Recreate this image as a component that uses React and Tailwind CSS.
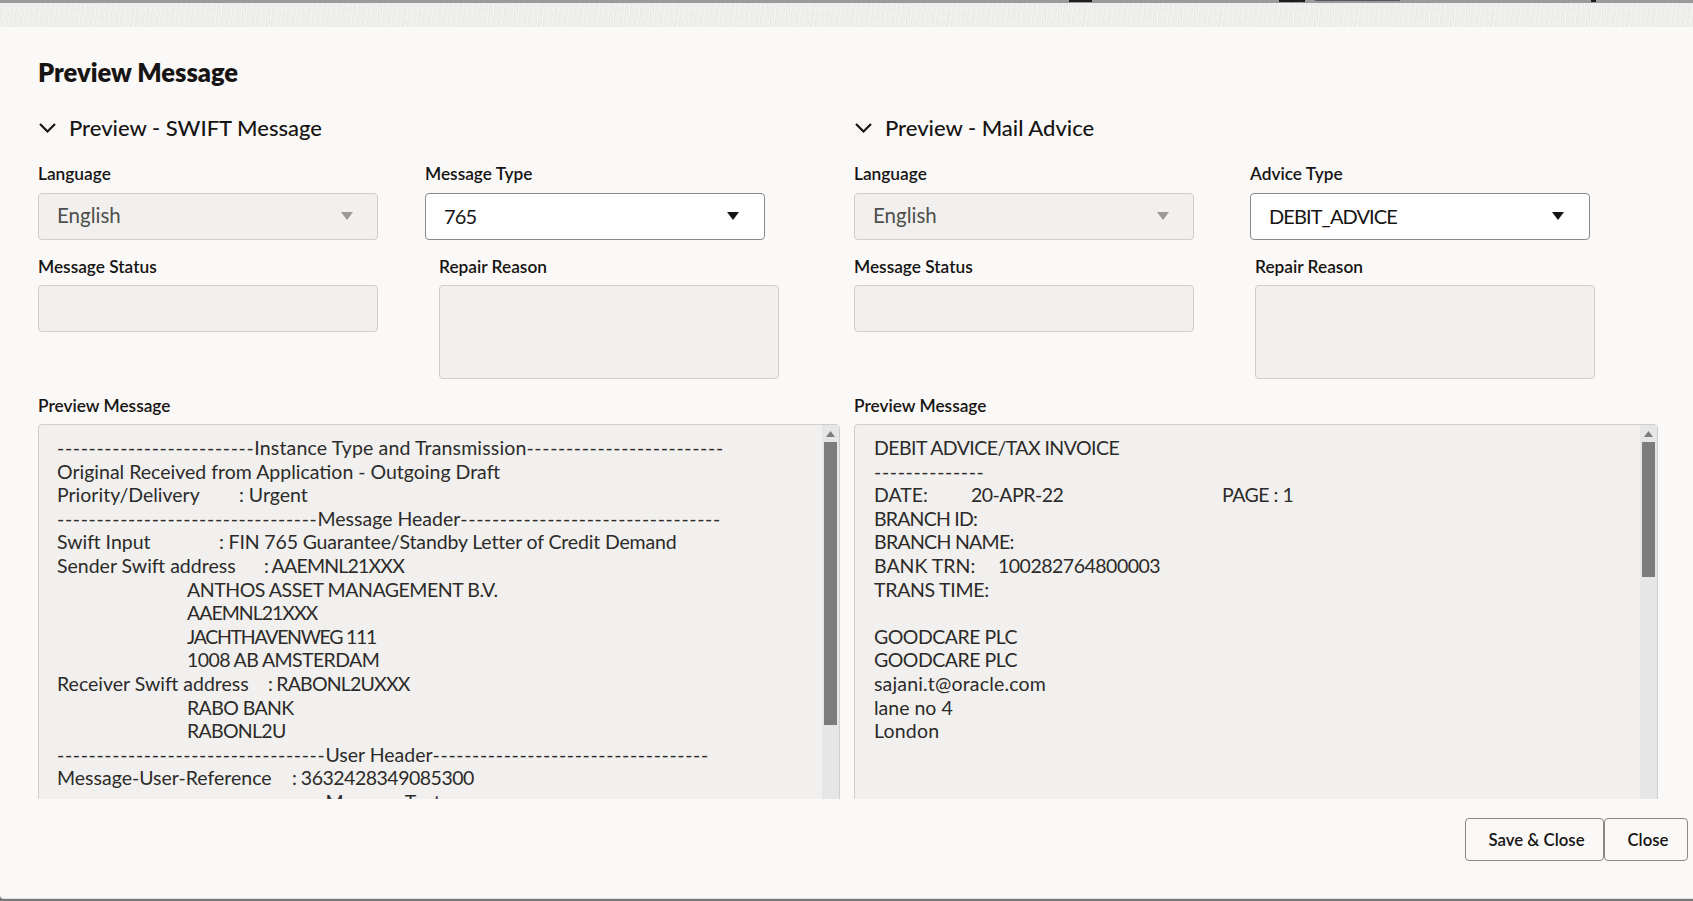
const swiftLines = [
  { text: "-------------------------Instance Type and Transmission-------------------------", track: "tracking-[0.15px]" },
  { text: "Original Received from Application - Outgoing Draft" },
  { label: "Priority/Delivery", labelClass: "w-[182px]", text: ": Urgent" },
  { text: "---------------------------------Message Header---------------------------------" },
  { label: "Swift Input", labelClass: "w-[162px]", text: ": FIN 765 Guarantee/Standby Letter of Credit Demand", track: "tracking-[-0.15px]" },
  { label: "Sender Swift address", labelClass: "w-[207px]", text: ": AAEMNL21XXX", track: "tracking-[-0.8px]" },
  { text: "ANTHOS ASSET MANAGEMENT B.V.", indent: true, track: "tracking-[-0.46px]" },
  { text: "AAEMNL21XXX", indent: true, track: "tracking-[-1px]" },
  { text: "JACHTHAVENWEG 111", indent: true, track: "tracking-[-1.3px]" },
  { text: "1008 AB AMSTERDAM", indent: true, track: "tracking-[-0.6px]" },
  { label: "Receiver Swift address", labelClass: "w-[211px]", text: ": RABONL2UXXX", track: "tracking-[-0.8px]" },
  { text: "RABO BANK", indent: true, track: "tracking-[-0.6px]" },
  { text: "RABONL2U", indent: true, track: "tracking-[-0.7px]" },
  { text: "----------------------------------User Header-----------------------------------" },
  { label: "Message-User-Reference", labelClass: "w-[235px]", text: ": 3632428349085300", track: "tracking-[-0.5px]" },
  { text: "----------------------------------Message Text----------------------------------" },
];

const adviceLines = [
  { text: "DEBIT ADVICE/TAX INVOICE", track: "tracking-[-0.55px]" },
  { text: "--------------" },
  { label: "DATE:", labelClass: "w-[97px]", text: "20-APR-22", after: "PAGE : 1", track: "tracking-[-0.5px]" },
  { text: "BRANCH ID:", track: "tracking-[-0.8px]" },
  { text: "BRANCH NAME:", track: "tracking-[-0.7px]" },
  { label: "BANK TRN:", labelClass: "w-[124px]", text: "100282764800003", track: "tracking-[-0.5px]" },
  { text: "TRANS TIME:", track: "tracking-[-0.3px]" },
  { text: "\u00a0" },
  { text: "GOODCARE PLC", track: "tracking-[-0.5px]" },
  { text: "GOODCARE PLC", track: "tracking-[-0.5px]" },
  { text: "sajani.t@oracle.com", track: "tracking-[0.17px]" },
  { text: "lane no 4" },
  { text: "London", track: "tracking-[0.2px]" },
];

const Label = ({ children }) => (
  <div className="h-[24px] text-[17.3px] leading-[24px] font-semibold text-[#161513]">{children}</div>
);

const Caret = ({ disabled }) => (
  <svg width="12" height="8" viewBox="0 0 12 8">
    <path d="M0 0h12L6 8z" fill={disabled ? "#9b9a98" : "#161513"} />
  </svg>
);

const SelectField = ({ label, value, disabled, className }) => (
  <div className={className}>
    <Label>{label}</Label>
    <div
      className={
        disabled
          ? "mt-[7px] flex h-[47px] w-[340px] items-center justify-between rounded-[4px] border border-[#cfcecc] bg-[#f1f0ee] pb-[2px] pl-[18px] pr-[24px] text-[20.5px] text-[#4f4e4c]"
          : "mt-[7px] flex h-[47px] w-[340px] items-center justify-between rounded-[4px] border border-[#8a8987] bg-white pb-[2px] pl-[18px] pr-[25px] text-[20px] tracking-[-0.9px] text-[#161513]"
      }
    >
      <span>{value}</span>
      <Caret disabled={disabled} />
    </div>
  </div>
);

const EmptyField = ({ label, className, boxClass }) => (
  <div className={className}>
    <Label>{label}</Label>
    <div className={`mt-[6px] w-[340px] rounded-[4px] border border-[#cfcecc] bg-[#f1f0ee] ${boxClass}`} />
  </div>
);

// the dashes in the reference are wider than Lato's hyphen
const withDashes = (text) =>
  text.split(/(-{3,})/).map((part, index) =>
    part.startsWith("---") ? (
      <span key={index} className="tracking-[0.65px]">{part}</span>
    ) : (
      part
    ),
  );

const MessageLine = ({ line }) => (
  <div className={`h-[23.6px] whitespace-pre ${line.indent ? "pl-[130px]" : ""} ${line.track || ""}`}>
    {line.label && <span className={`inline-block tracking-normal ${line.labelClass}`}>{line.label}</span>}
    <span className={line.after ? "inline-block w-[251px]" : ""}>{withDashes(line.text)}</span>
    {line.after && <span>{line.after}</span>}
  </div>
);

const PreviewBox = ({ lines, thumbClass, padClass }) => (
  <div className="flex h-[420px] rounded-[4px] border border-[#cfcecc] bg-[#f1f0ee]">
    <div className={`flex-1 overflow-hidden pt-[11px] text-[19.5px] leading-[23.6px] text-[#2c2b29] ${padClass}`}>
      {lines.map((line, index) => (
        <MessageLine key={index} line={line} />
      ))}
    </div>
    <div className="flex w-[17px] flex-col items-center bg-[#e6e6e6]">
      <svg width="9" height="6" viewBox="0 0 9 6" className="mt-[6px] mb-[5px]">
        <path d="M0 6h9L4.5 0z" fill="#7c7c7c" />
      </svg>
      <div className={`w-[13px] bg-[#7c7c7c] ${thumbClass}`} />
    </div>
  </div>
);

const Section = ({ title, secondLabel, secondValue, secondClass, reasonClass, lines, thumbClass, padClass }) => (
  <section>
    <div className="flex h-[32px] items-center gap-[12px] text-[#161513]">
      <svg width="19" height="12" viewBox="0 0 19 12" fill="none" stroke="#161513" strokeWidth="2.2">
        <path d="M2 2l7.5 7.5L17 2" />
      </svg>
      <h2 className="text-[22px] font-medium leading-[32px]">{title}</h2>
    </div>
    <div className="mt-[18px] flex">
      <SelectField label="Language" value="English" disabled />
      <SelectField label={secondLabel} value={secondValue} className={secondClass} />
    </div>
    <div className="mt-[15px] flex">
      <EmptyField label="Message Status" boxClass="h-[47px]" />
      <EmptyField label="Repair Reason" boxClass="h-[94px]" className={reasonClass} />
    </div>
    <div className="mt-[15px]">
      <Label>Preview Message</Label>
      <div className="mt-[6px]">
        <PreviewBox lines={lines} thumbClass={thumbClass} padClass={padClass} />
      </div>
    </div>
  </section>
);

const Button = ({ children, className }) => (
  <button
    type="button"
    className={`h-[43px] rounded-[4px] border border-[#8a8987] bg-[#fbf9f8] pl-[4px] text-[16.8px] font-semibold text-[#161513] ${className}`}
  >
    {children}
  </button>
);

export default function App() {
  return (
    <div className="flex h-[901px] flex-col overflow-hidden bg-[#77777a] font-['Lato','Noto_Sans',sans-serif]">
      <div className="flex h-[3px] items-start bg-[#9a999b]">
        <span className="ml-[1069px] h-[2px] w-[23px] bg-[#1c1c1c]" />
        <span className="ml-[187px] h-[2px] w-[26px] bg-[#1c1c1c]" />
        <span className="ml-[10px] h-[1px] w-[85px] bg-[#55555a]" />
        <span className="ml-[191px] h-[2px] w-[5px] bg-[#1c1c1c]" />
      </div>
      <div className="h-[24px] bg-[#ececeb] bg-[repeating-linear-gradient(97deg,#f3f3f2_0px,#f3f3f2_1px,#e6e6e5_2px,#f1f1f0_3px,#e9e9e8_5px)]" />

      <main className="flex min-h-0 flex-1 flex-col rounded-bl-[4px] border-b border-[#e0dfdd] bg-[#fbf9f8]">
        <div className="min-h-0 flex-1 overflow-hidden px-[38px] pt-[27px]">
          <h1 className="h-[36px] text-[25.5px] font-extrabold leading-[36px] text-[#161513]">Preview Message</h1>
          <div className="mt-[22px] grid grid-cols-[802px_804px] gap-x-[14px]">
            <Section
              title="Preview - SWIFT Message"
              secondLabel="Message Type"
              secondValue="765"
              secondClass="ml-[47px]"
              reasonClass="ml-[61px]"
              lines={swiftLines}
              thumbClass="h-[283px]"
              padClass="pl-[18px]"
            />
            <Section
              title="Preview - Mail Advice"
              secondLabel="Advice Type"
              secondValue="DEBIT_ADVICE"
              secondClass="ml-[56px]"
              reasonClass="ml-[61px]"
              lines={adviceLines}
              thumbClass="h-[135px]"
              padClass="pl-[19px]"
            />
          </div>
        </div>
        <footer className="flex h-[99px] shrink-0 items-start justify-end pr-[5px] pt-[19px]">
          <Button className="w-[139px]">Save &amp; Close</Button>
          <Button className="w-[84px]">Close</Button>
        </footer>
      </main>
      <div className="h-[2px] bg-[#77777a]" />
    </div>
  );
}
